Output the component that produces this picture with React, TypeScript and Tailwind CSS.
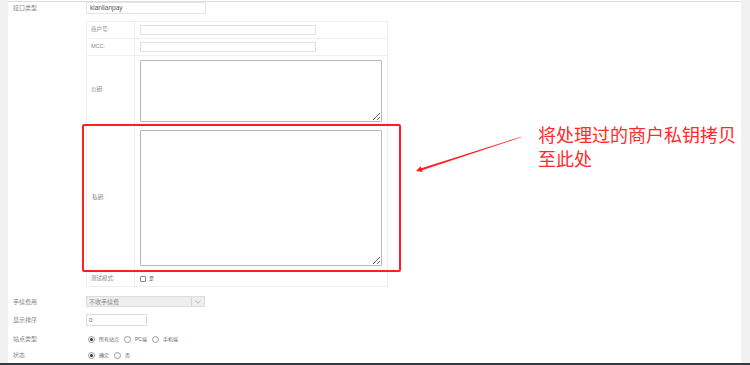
import React from 'react';

function Radio({ checked, label }: { checked?: boolean; label: string }) {
  return (
    <div className="flex items-center gap-[4px]">
      <span className="w-[7px] h-[7px] rounded-full border border-[#9a9a9a] bg-white flex items-center justify-center">
        {checked && <span className="w-[3px] h-[3px] rounded-full bg-[#333]" />}
      </span>
      <span className="text-[5px] text-[#666]">{label}</span>
    </div>
  );
}

export default function App() {
  return (
    <div className="relative w-[750px] h-[365px] overflow-hidden bg-white flex flex-col font-['Liberation_Sans','Noto_Sans_CJK_SC',sans-serif] text-[6px] text-[#888] leading-none">
      <div className="flex flex-1 min-h-0">
        {/* left gutter */}
        <div className="w-[8px] bg-[#f1f1f1]" />

        <div className="flex-1 pt-[1px] bg-white">
          <div className="border-t border-[#dedede]">
            {/* 接口类型 */}
            <div className="flex items-center h-[12px]">
              <div className="w-[78px] pl-[5px]">接口类型</div>
              <div className="w-[120px] h-[12px] border border-[#e4e4e4] px-[3px] flex items-center text-[6.5px] text-[#555]">
                kianlianpay
              </div>
            </div>

            {/* sub table */}
            <div className="ml-[78px] mt-[7px] w-[302px] border border-[#f0f0f0] text-[5.5px]">
              <div className="flex h-[17px] border-b border-[#f0f0f0]">
                <div className="w-[48px] border-r border-[#f0f0f0] pl-[4px] flex items-center">商户号:</div>
                <div className="flex-1 pl-[5px] flex items-center">
                  <div className="w-[176px] h-[10px] border border-[#e2e2e2]" />
                </div>
              </div>
              <div className="flex h-[17px] border-b border-[#f0f0f0]">
                <div className="w-[48px] border-r border-[#f0f0f0] pl-[4px] flex items-center">MCC:</div>
                <div className="flex-1 pl-[5px] flex items-center">
                  <div className="w-[176px] h-[10px] border border-[#e2e2e2]" />
                </div>
              </div>
              <div className="flex h-[69px] border-b border-[#f0f0f0]">
                <div className="w-[48px] border-r border-[#f0f0f0] pl-[4px] flex items-center">公钥:</div>
                <div className="flex-1 pl-[5px] pt-[4px]">
                  <textarea className="block w-[242px] h-[62px] border border-[#b8b8b8] rounded-[1px] bg-white" />
                </div>
              </div>
              <div className="flex h-[146px] border-b border-[#f0f0f0]">
                <div className="w-[48px] border-r border-[#f0f0f0] pl-[5px] flex items-center">私钥:</div>
                <div className="flex-1 pl-[5px] pt-[5px]">
                  <textarea className="block w-[242px] h-[136px] border border-[#b8b8b8] rounded-[1px] bg-white" />
                </div>
              </div>
              <div className="flex h-[15px]">
                <div className="w-[48px] border-r border-[#f0f0f0] pl-[4px] flex items-center">测试模式:</div>
                <div className="flex-1 pl-[5px] flex items-center gap-[3px]">
                  <span className="w-[6px] h-[6px] border border-[#888] rounded-[1px] bg-white" />
                  <span className="text-[5px] text-[#666]">是</span>
                </div>
              </div>
            </div>

            {/* 手续费用 */}
            <div className="flex items-center h-[11px] mt-[9px]">
              <div className="w-[78px] pl-[5px]">手续费用</div>
              <div className="w-[119px] h-[11px] border border-[#dcdcdc] bg-[#eeeeee] flex items-center">
                <span className="flex-1 pl-[2px] text-[6px] text-[#888]">不收手续费</span>
                <span className="w-[13px] h-full border-l border-[#d6d6d6] flex items-center justify-center">
                  <svg width="6" height="4" viewBox="0 0 6 4">
                    <path d="M0.5 0.8 L3 3.2 L5.5 0.8" fill="none" stroke="#9a9a9a" strokeWidth="0.7" />
                  </svg>
                </span>
              </div>
            </div>

            {/* 显示排序 */}
            <div className="flex items-center h-[12px] mt-[7px]">
              <div className="w-[78px] pl-[5px]">显示排序</div>
              <div className="w-[61px] h-[12px] border border-[#dcdcdc] px-[2px] flex items-center text-[6px] text-[#666]">0</div>
            </div>

            {/* 站点类型 */}
            <div className="flex items-center h-[12px] mt-[7px]">
              <div className="w-[80px] pl-[5px]">站点类型</div>
              <div className="flex items-center gap-[5px]">
                <Radio checked label="所有站点" />
                <Radio label="PC端" />
                <Radio label="手机端" />
              </div>
            </div>

            {/* 状态 */}
            <div className="flex items-center h-[12px] mt-[4px]">
              <div className="w-[80px] pl-[5px]">状态</div>
              <div className="flex items-center gap-[5px]">
                <Radio checked label="确定" />
                <Radio label="否" />
              </div>
            </div>
          </div>
        </div>

        {/* right gutter */}
        <div className="w-[9px] bg-[#f1f1f1]" />
      </div>
      <div className="h-[2px] bg-[#2f3a44]" />

      {/* annotation: red box */}
      <div className="absolute left-[82px] top-[124px] w-[319px] h-[148px] border-2 border-[#ff1f1f] rounded-[2px] pointer-events-none" />

      {/* annotation: arrow */}
      <svg className="absolute left-0 top-0 pointer-events-none" width="750" height="365" viewBox="0 0 750 365">
        <polygon
          points="521,136.7 421.3,168.2 420.6,166.3 416,171 422.8,171.9 422.1,170.3 521,137.3"
          fill="#ff1f1f"
        />
      </svg>

      {/* annotation: text */}
      <div className="absolute left-[538px] top-[122px] text-[18px] leading-[24px] text-[#ff2a2a] font-['Noto_Sans_CJK_SC',sans-serif] whitespace-nowrap">
        <div>将处理过的商户私钥拷贝</div>
        <div>至此处</div>
      </div>
    </div>
  );
}
